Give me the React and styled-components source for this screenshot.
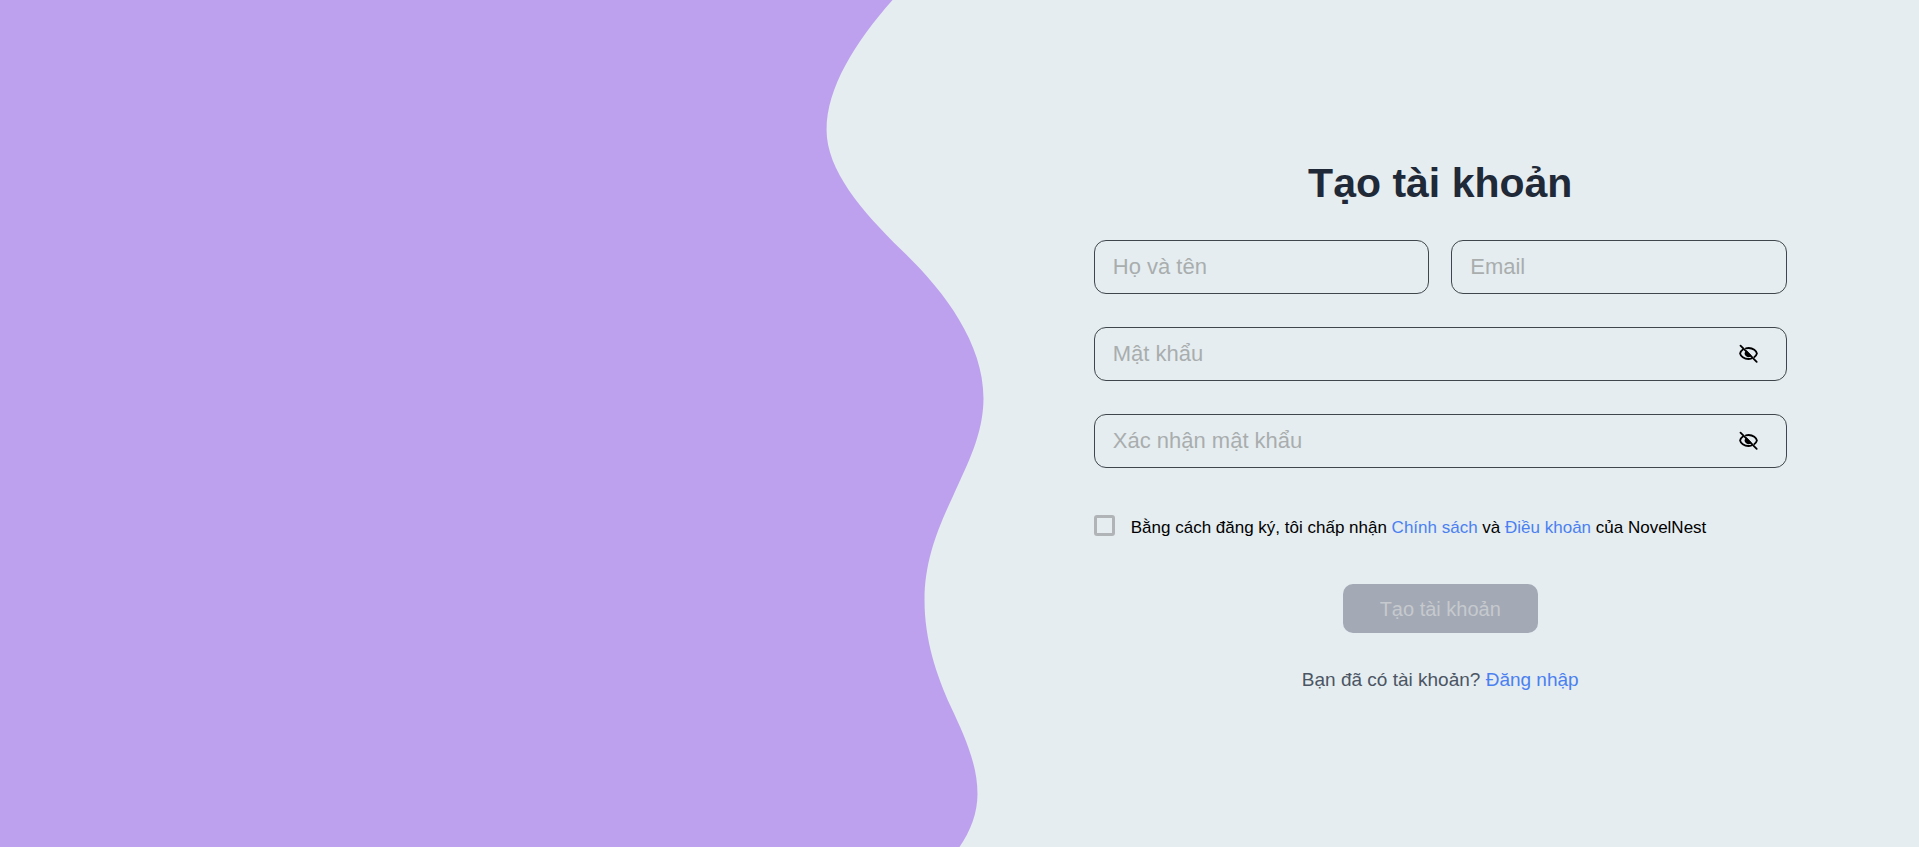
import React, { useState } from "react";
import styled, { createGlobalStyle } from "styled-components";

const GlobalStyle = createGlobalStyle`
  *, *::before, *::after { box-sizing: border-box; }
  body {
    margin: 0;
    background: #e5edf0;
    font-family: "Liberation Sans", Arial, sans-serif;
  }
`;

const Page = styled.main`
  display: grid;
  grid-template-columns: 1fr 1fr;
  min-height: 100vh;
  overflow: hidden;
`;

const WavePane = styled.div`
  display: grid;
`;

const Wave = styled.svg`
  width: 100%;
  height: 100%;
  min-height: 0;
  overflow: visible;
  fill: #bea1ee;
`;

const FormPane = styled.section`
  display: flex;
  flex-direction: column;
  align-items: center;
  justify-content: center;
  padding: 4px 22px 0 24px;
`;

const Form = styled.form`
  display: flex;
  flex-direction: column;
  width: 100%;
  max-width: 693px;
`;

const Title = styled.h1`
  margin: 0 0 32px;
  color: #1f2937;
  font-size: 41px;
  line-height: 50px;
  text-align: center;
`;

const Fields = styled.div`
  display: grid;
  grid-template-columns: 1fr 1fr;
  gap: 33px 22px;
`;

const Field = styled.div`
  display: flex;
  align-items: center;
  grid-column: ${({ $wide }) => ($wide ? "1 / -1" : "auto")};
  height: 54px;
  padding: 0 26px 0 18px;
  border: 1px solid #3f474d;
  border-radius: 12px;
`;

const Input = styled.input`
  flex: 1;
  min-width: 0;
  padding: 0;
  border: 0;
  outline: 0;
  background: transparent;
  color: #1f2937;
  font: 22px/32px "Liberation Sans", Arial, sans-serif;

  &::placeholder { color: #a9adae; opacity: 1; }
`;

const EyeButton = styled.button`
  display: flex;
  padding: 0;
  border: 0;
  background: transparent;
  color: #000;
  cursor: pointer;
`;

const EyeIcon = styled.svg`
  width: 24px;
  height: 24px;
  fill: none;
  stroke: currentColor;
  stroke-width: 1.8;
  stroke-linecap: round;
`;

const Terms = styled.div`
  display: flex;
  align-items: flex-start;
  gap: 16px;
  margin-top: 47px;
  color: #000;
  font-size: 17px;
  line-height: 26px;
`;

const Checkbox = styled.input`
  appearance: none;
  flex: none;
  width: 21px;
  height: 21px;
  margin: 0;
  border: 3px solid #b0b4b6;
  border-radius: 3px;

  &:checked { background: #4a80f0; }
`;

const Link = styled.a`
  color: #4a80f0;
  text-decoration: none;
`;

const Submit = styled.button`
  align-self: center;
  height: 49px;
  margin-top: 43px;
  padding: 0 37px;
  border: 0;
  border-radius: 10px;
  background: #a3a9b5;
  color: #c6c9ce;
  font: 20px/28px "Liberation Sans", Arial, sans-serif;
`;

const SignIn = styled.p`
  margin: 34px 0 0;
  color: #4b5563;
  font-size: 19px;
  line-height: 26px;
  text-align: center;
`;

function Eye({ open }) {
  return (
    <EyeIcon viewBox="0 0 24 24" aria-hidden="true">
      {open ? (
        <>
          <ellipse cx="12.5" cy="11.5" rx="7.8" ry="5.5" />
          <circle cx="12.5" cy="11.5" r="2.6" />
        </>
      ) : (
        <>
          <path d="M4.5 3.6L20.7 19.8" />
          <path d="M9.9 6.4C10.7 6.2 11.6 6 12.6 6C17.2 6 20.4 9 20.9 11.5C20.5 12.9 19.7 14.1 18.4 15" />
          <path d="M6.9 7.6C5.3 8.7 4.4 10.1 4.1 11.5C4.6 14 8 17 12.5 17C13.6 17 14.6 16.8 15.5 16.5" />
          <path d="M10.5 9.6A2.7 2.7 0 0 0 14.3 13.5Z" fill="currentColor" />
        </>
      )}
    </EyeIcon>
  );
}

function PasswordField({ label }) {
  const [visible, setVisible] = useState(false);
  return (
    <Field $wide>
      <Input
        type={visible ? "text" : "password"}
        placeholder={label}
        aria-label={label}
      />
      <EyeButton
        type="button"
        aria-label={visible ? "Ẩn mật khẩu" : "Hiện mật khẩu"}
        onClick={() => setVisible(!visible)}
      >
        <Eye open={visible} />
      </EyeButton>
    </Field>
  );
}

export default function App() {
  return (
    <>
      <GlobalStyle />
      <Page>
        <WavePane>
          <Wave viewBox="0 0 960 847" preserveAspectRatio="none" aria-hidden="true">
            <path d="M0 0H893C855 43 827 88 827 130C827 170 862 211 902 250C943 289 984 342 984 398C984 434 968 464 954 495C939 527 925 560 925 600C925 640 937 675 951 706C964 734 978 763 978 794C978 813 971 831 960 847H0Z" />
          </Wave>
        </WavePane>
        <FormPane>
          <Form>
            <Title>Tạo tài khoản</Title>
            <Fields>
              <Field>
                <Input type="text" placeholder="Họ và tên" aria-label="Họ và tên" />
              </Field>
              <Field>
                <Input type="email" placeholder="Email" aria-label="Email" />
              </Field>
              <PasswordField label="Mật khẩu" />
              <PasswordField label="Xác nhận mật khẩu" />
            </Fields>
            <Terms>
              <Checkbox type="checkbox" id="terms" />
              <label htmlFor="terms">
                Bằng cách đăng ký, tôi chấp nhận <Link href="#policy">Chính sách</Link> và{" "}
                <Link href="#terms">Điều khoản</Link> của NovelNest
              </label>
            </Terms>
            <Submit type="submit" disabled>
              Tạo tài khoản
            </Submit>
            <SignIn>
              Bạn đã có tài khoản? <Link href="#login">Đăng nhập</Link>
            </SignIn>
          </Form>
        </FormPane>
      </Page>
    </>
  );
}
